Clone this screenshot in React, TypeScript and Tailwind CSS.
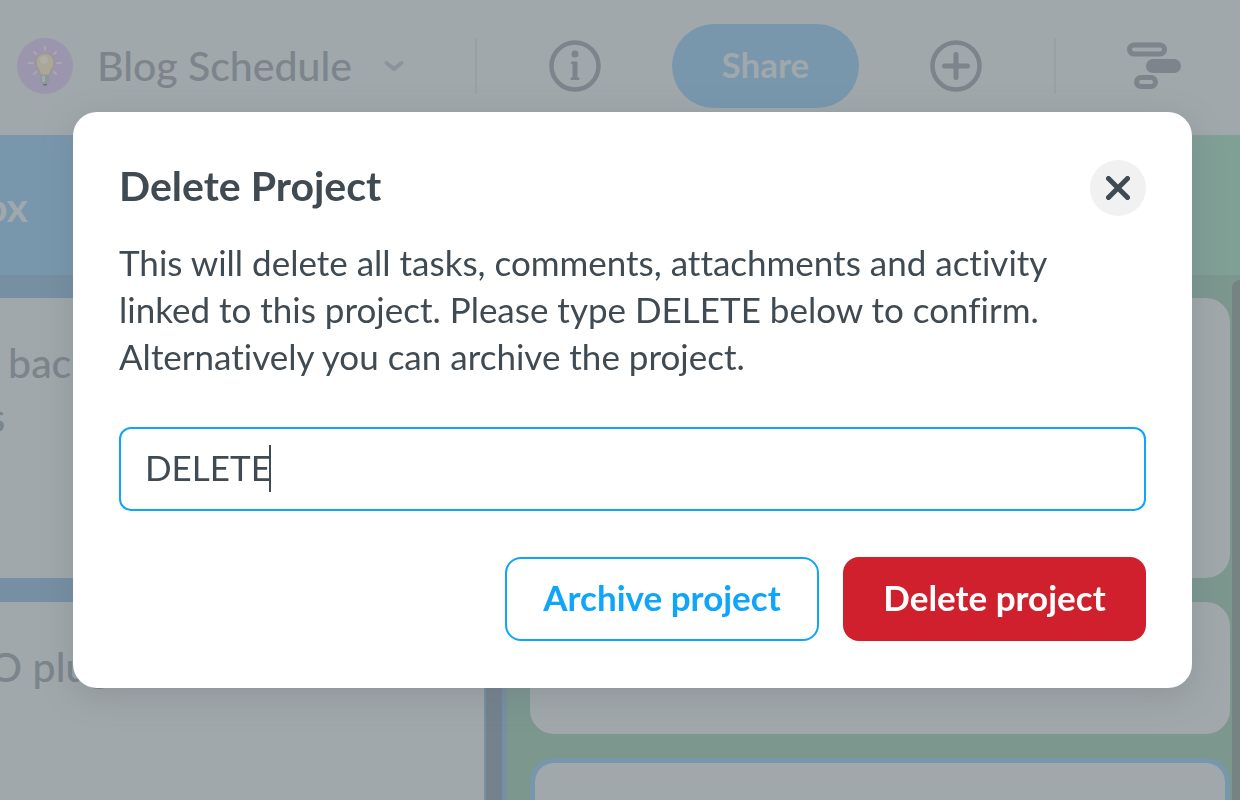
import React, { useState } from 'react';

/* Top bar: project name, info, share, add and timeline actions */
const ProjectHeader: React.FC = () => (
  <header className="flex h-[135px] shrink-0 items-center justify-between pl-[17px] pr-[59px] pb-1 text-[#7c848c]">
    <div className="flex items-center">
      <span className="flex h-14 w-14 items-center justify-center rounded-full bg-[#9b95ae]">
        <svg width="34" height="42" viewBox="0 0 34 42" fill="none" aria-hidden="true">
          <g stroke="#aaa7b4" strokeWidth="2" strokeLinecap="round">
            <path d="M17 2v3M6 7l2 2M28 7l-2 2M1 18h4M29 18h4M6 29l2-2M28 29l-2-2" />
          </g>
          <path d="M17 8.500c-5.500 0-9 4-9 9 0 5 4 7 4.500 12.500h9C22 24.500 26 22.500 26 17.500c0-5-3.500-9-9-9z" fill="#aaa798" stroke="#999688" strokeWidth="1" />
          <ellipse cx="16" cy="15" rx="4" ry="4" fill="#b0aea4" />
          <path d="M12.500 30h9v5c0 2-2 3-2.500 5.500h-4c-.5-2.500-2.500-3.500-2.500-5.500z" fill="#8d979b" />
          <path d="M14 31h3v6h-3z" fill="#a0a8ab" />
          <path d="M15 39h4v1.500h-4z" fill="#6b747b" />
        </svg>
      </span>
      <h1 className="ml-6 text-[41px] leading-[48px] font-medium">Blog Schedule</h1>
      <button type="button" aria-label="Project menu" className="ml-8 text-[#8c949b]">
        <svg width="20" height="14" viewBox="0 0 20 14" fill="none" stroke="currentColor" strokeWidth="4" strokeLinecap="round" strokeLinejoin="round">
          <path d="M2.500 4L10 10l7.500-6" />
        </svg>
      </button>
    </div>
    <span className="h-14 w-0.5 bg-[#99a1a7]" />
    <button type="button" aria-label="Project info">
      <svg width="52" height="52" viewBox="0 0 52 52" fill="none">
        <circle cx="26" cy="26" r="23.500" stroke="currentColor" strokeWidth="4.500" />
        <circle cx="26" cy="14" r="3.500" fill="currentColor" />
        <path d="M22.500 22h5.500v16h2v1.500h-8V38h2V23.500h-1.500z" fill="currentColor" stroke="currentColor" strokeLinejoin="round" />
      </svg>
    </button>
    <button type="button" className="h-[84px] w-[187px] rounded-full bg-[#7897ad] pb-1 text-[35px] leading-10 font-bold text-[#a0a8ab]">
      Share
    </button>
    <button type="button" aria-label="Add">
      <svg width="52" height="52" viewBox="0 0 52 52" fill="none" stroke="currentColor" strokeLinecap="round">
        <circle cx="26" cy="26" r="23.500" strokeWidth="4.500" />
        <path d="M26 14.500v23M14.500 26h23" strokeWidth="5" />
      </svg>
    </button>
    <span className="h-14 w-0.5 bg-[#99a1a6]" />
    <button type="button" aria-label="Timeline">
      <svg width="54" height="48" viewBox="0 0 54 48" fill="none" stroke="currentColor" strokeWidth="5">
        <rect x="2.500" y="3" width="35" height="9" rx="4.500" />
        <rect x="19" y="17" width="35" height="14" rx="7" fill="currentColor" stroke="none" />
        <rect x="9.500" y="35.500" width="19" height="9" rx="4.500" />
      </svg>
    </button>
  </header>
);

/* Board columns behind the dialog */
const Board: React.FC = () => (
  <main className="flex flex-1 overflow-hidden text-[#7c848c]">
    <section className="flex w-[507px] shrink-0 flex-col bg-[#7897ad]">
      <h2 className="flex h-[140px] w-7 shrink-0 items-center justify-end whitespace-nowrap pt-1 text-[41px] leading-[48px] font-bold text-[#a0a8ab]">
        Inbox
      </h2>
      <div className="flex flex-1 bg-[#768fa2]">
        <div className="flex flex-1 flex-col gap-6 pt-[23px] text-[41px] leading-[54px] font-medium">
          <article className="h-[280px] shrink-0 bg-[#a0a8ab] pt-[38px]">
            <p className="-ml-14">
              Fix back
              <br />
              ads
            </p>
          </article>
          <article className="flex-1 bg-[#a0a8ab] pt-[38px]">
            <p className="-ml-14">SEO plugin</p>
          </article>
        </div>
        <div className="ml-0.5 mr-[5px] w-4 bg-[#73828d]" />
      </div>
    </section>
    <section className="flex flex-1 flex-col bg-[#809f95]">
      <div className="h-[140px] shrink-0" />
      <div className="flex flex-1 bg-[#7b978e]">
        <div className="flex flex-1 flex-col gap-6 pt-[23px] pl-[23px]">
          <article className="h-[280px] shrink-0 rounded-3xl bg-[#a0a8ab]" />
          <article className="h-[132px] shrink-0 rounded-3xl bg-[#a0a8ab]" />
          <article className="flex-1 rounded-t-3xl border-x-[5px] border-t-[5px] border-[#7897ad] bg-[#a0a8ab]" />
        </div>
        <div className="mt-[5px] ml-0.5 w-2 rounded-tl-lg bg-[#758383]" />
      </div>
    </section>
  </main>
);

/* Confirmation dialog */
const DeleteProjectDialog: React.FC = () => {
  const [value, setValue] = useState('DELETE');

  return (
    <div className="fixed inset-0 pt-28 pr-12 pl-[73px]">
      <div
        role="dialog"
        aria-modal="true"
        aria-labelledby="dialog-title"
        className="rounded-3xl bg-white px-[46px] pt-12 pb-[47px] text-[#3f4a53] shadow-[0_8px_32px_rgba(100,108,120,0.3)]"
      >
        <div className="flex items-center justify-between">
          <h2 id="dialog-title" className="pb-1 text-[41px] leading-[52px] font-bold">Delete Project</h2>
          <button type="button" aria-label="Close" className="flex h-14 w-14 items-center justify-center rounded-full bg-[#f1f1f1]">
            <svg width="24" height="24" viewBox="0 0 24 24" fill="none" stroke="currentColor" strokeWidth="5" strokeLinecap="round">
              <path d="M2.500 2.500l19 19M21.500 2.500l-19 19" />
            </svg>
          </button>
        </div>
        <label htmlFor="confirm" className="mt-[23px] block text-[35px] leading-[47px]">
          This will delete all tasks, comments, attachments and activity
          <br />
          linked to this project. Please type DELETE below to confirm.
          <br />
          Alternatively you can archive the project.
        </label>
        <div className="relative mt-[47px]">
          <input
            id="confirm"
            type="text"
            value={value}
            onChange={(e) => setValue(e.target.value)}
            className="block h-[84px] w-full rounded-xl border-2 border-[#0fa5fb] px-6 pb-1 text-[35px] caret-transparent outline-none"
          />
          <span className="pointer-events-none absolute top-[18px] left-[150px] h-[47px] w-0.5 bg-[#3f4a53]" />
        </div>
        <div className="mt-[46px] flex justify-end gap-6 text-[35px] leading-[48px] font-bold">
          <button type="button" className="h-[84px] w-[314px] rounded-2xl border-2 border-[#0fa5fb] pb-1 text-[#0fa5fb]">
            Archive project
          </button>
          <button type="button" className="h-[84px] w-[303px] rounded-2xl bg-[#d0202e] pb-1 text-white">
            Delete project
          </button>
        </div>
      </div>
    </div>
  );
};

const App: React.FC = () => (
  <div className="flex h-screen flex-col overflow-hidden bg-[#a0a8ab] font-['Lato',sans-serif] [font-variant-ligatures:none]">
    <ProjectHeader />
    <Board />
    <DeleteProjectDialog />
  </div>
);

export default App;
